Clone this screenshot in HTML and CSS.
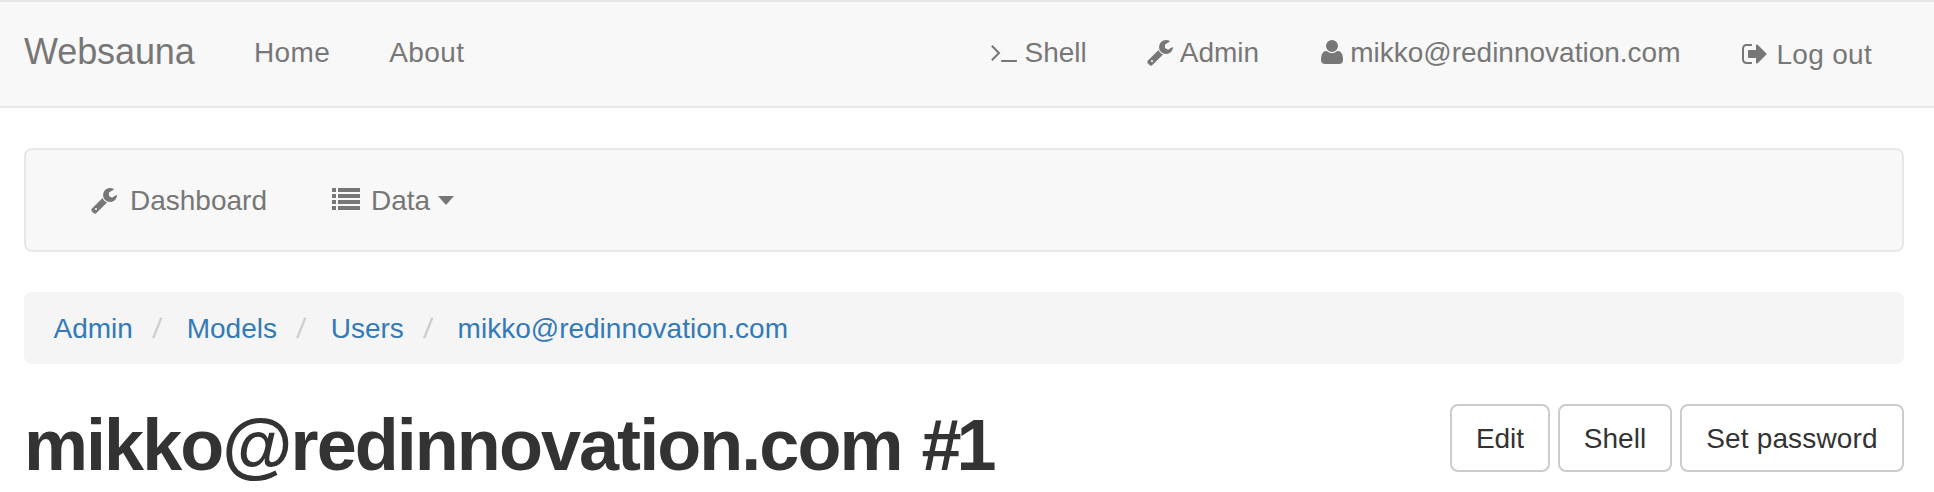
FILE: index.html
```
<!DOCTYPE html>
<html lang="en">
<head>
<meta charset="utf-8">
<title>Websauna admin</title>
<link rel="stylesheet" href="styles.css">
</head>
<body>
<svg class="defs" width="0" height="0" aria-hidden="true">
  <symbol id="terminal" viewBox="0 0 1792 1792"><path d="M649 983l-466 466q-10 10-23 10t-23-10l-50-50q-10-10-10-23t10-23l393-393-393-393q-10-10-10-23t10-23l50-50q10-10 23-10t23 10l466 466q10 10 10 23t-10 23zm1079 457v64q0 14-9 23t-23 9h-960q-14 0-23-9t-9-23v-64q0-14 9-23t23-9h960q14 0 23 9t9 23z"/></symbol>
  <symbol id="wrench" viewBox="0 0 1792 1792"><path d="M448 1472q0-26-19-45t-45-19-45 19-19 45 19 45 45 19 45-19 19-45zm644-420l-682 682q-37 37-90 37-52 0-91-37l-106-108q-38-36-38-90 0-53 38-91l681-681q39 98 114.500 173.500t173.500 114.500zm634-435q0 39-23 106-47 134-164.500 217.500t-258.500 83.500q-185 0-316.500-131.500t-131.500-316.500 131.500-316.500 316.500-131.500q58 0 121.500 16.500t107.500 46.500q16 11 16 28t-16 28l-293 169v224l193 107q5-3 79-48.500t135.500-81 70.500-35.500q15 0 23.500 10t8.500 25z"/></symbol>
  <symbol id="user" viewBox="0 0 1792 1792"><path d="M1600 1405q0 120-73 189.500t-194 69.500h-874q-121 0-194-69.500t-73-189.500q0-53 3.500-103.500t14-109 26.500-108.500 43-97.500 62-81 85.500-53.500 111.500-20q9 0 42 21.500t74.500 48 108 48 133.500 21.500 133.500-21.500 108-48 74.500-48 42-21.500q61 0 111.500 20t85.500 53.500 62 81 43 97.500 26.500 108.500 14 109 3.500 103.500zm-320-893q0 159-112.500 271.500t-271.500 112.500-271.500-112.500-112.500-271.500 112.500-271.500 271.500-112.500 271.500 112.500 112.500 271.500z"/></symbol>
  <symbol id="sign-out" viewBox="0 0 1792 1792"><path d="M704 1440q0 4 1 20t.5 26.500-3 23.500-10 19.500-20.500 6.500h-320q-119 0-203.500-84.500t-84.500-203.500v-704q0-119 84.500-203.500t203.500-84.500h320q13 0 22.500 9.500t9.500 22.500q0 4 1 20t.5 26.500-3 23.500-10 19.500-20.500 6.500h-320q-66 0-113 47t-47 113v704q0 66 47 113t113 47h312l11.500 1 11.500 3 8 5.500 7 9 2 13.500zm928-544q0 26-19 45l-544 544q-19 19-45 19t-45-19-19-45v-288h-448q-26 0-45-19t-19-45v-384q0-26 19-45t45-19h448v-288q0-26 19-45t45-19 45 19l544 544q19 19 19 45z"/></symbol>
  <symbol id="list" viewBox="0 0 28 28"><path d="M0 4h4v4H0zM6 4h22v4H6zM0 10h4v4H0zM6 10h22v4H6zM0 16h4v4H0zM6 16h22v4H6zM0 22h4v4H0zM6 22h22v4H6z"/></symbol>
</svg>
<header class="navbar">
  <a class="brand">Websauna</a>
  <nav class="links"><a class="home">Home</a><a class="about">About</a></nav>
  <nav class="account">
    <a><svg class="icon terminal"><use href="#terminal"/></svg><span>Shell</span></a>
    <a class="admin"><svg class="icon"><use href="#wrench"/></svg><span>Admin</span></a>
    <a class="profile"><svg class="icon"><use href="#user"/></svg><span>mikko@redinnovation.com</span></a>
    <a class="logout"><svg class="icon"><use href="#sign-out"/></svg><span>Log out</span></a>
  </nav>
</header>
<main class="container">
  <nav class="toolbar">
    <a><svg class="icon dash"><use href="#wrench"/></svg><span>Dashboard</span></a>
    <a><svg class="icon list"><use href="#list"/></svg><span>Data</span><i class="caret"></i></a>
  </nav>
  <ol class="breadcrumb">
    <li><a>Admin</a></li><li><a>Models</a></li><li><a>Users</a></li><li><a>mikko@redinnovation.com</a></li>
  </ol>
  <div class="heading">
    <h1>mikko@redinnovation.com <span class="record">#1</span></h1>
    <div class="actions"><button class="edit">Edit</button><button class="shell">Shell</button><button class="password">Set password</button></div>
  </div>
</main>
</body>
</html>
```
FILE: styles.css
```
* { box-sizing: border-box; }
body {
  margin: 0;
  background: #fff;
  color: #333;
  font: 28px/40px "Liberation Sans", Arial, sans-serif;
}
.defs { position: absolute; }
.navbar {
  display: flex;
  align-items: flex-start;
  height: 108px;
  padding: 31px 62px 0 24px;
  background: #f8f8f8;
  border: solid #e7e7e7;
  border-width: 2px 0;
  color: #777;
}
.brand { font-size: 36px; width: 230px; margin-top: -1px; letter-spacing: -.1px; }
.links { display: flex; gap: 59px; letter-spacing: .4px; }
.account { display: flex; margin-left: auto; }
.account a { display: flex; white-space: nowrap; }
.account .admin { margin-left: 59px; }
.account .profile { margin-left: 59px; }
.account .logout { margin-left: 61px; padding-top: 2px; letter-spacing: .3px; }
.icon { flex: none; width: 28px; height: 28px; fill: currentColor; margin: 5px 6px 0 0; }
.account .profile .icon { margin-right: 4px; }
.account .logout .icon { margin-right: 7px; }
.container { padding: 40px 30px 0 24px; }
.toolbar {
  display: flex;
  gap: 65px;
  height: 104px;
  padding: 31px 64px 0;
  background: #f8f8f8;
  border: 2px solid #e7e7e7;
  border-radius: 8px;
  color: #777;
}
.toolbar a { display: flex; }
.toolbar .dash { margin-right: 12px; }
.toolbar .list { margin: 3px 11px 0 0; }
.caret {
  margin: 15px 0 0 8px;
  height: 0;
  border: solid transparent;
  border-width: 9px 8px 0;
  border-top-color: #777;
}
.breadcrumb {
  display: flex;
  list-style: none;
  height: 72px;
  margin: 40px 0;
  padding: 17px 29.500px 0;
  background: #f5f5f5;
  border-radius: 8px;
  color: #337ab7;
}
.breadcrumb li + li::before {
  content: "/";
  display: inline-block;
  margin: 0 26px 0 20px;
  color: #ccc;
  transform: skewX(-7deg);
}
.heading { display: flex; justify-content: space-between; align-items: flex-start; }
h1 { margin: 1px 0 0; font-size: 72px; line-height: 80px; letter-spacing: -1.95px; white-space: nowrap; }
.record { margin-left: 2px; letter-spacing: -5px; }
.actions { display: flex; gap: 8px; }
button {
  height: 68px;
  padding: 2px 0 0;
  border: 2px solid #ccc;
  border-radius: 8px;
  background: #fff;
  color: #333;
  font: inherit;
}
.edit { width: 100px; }
.shell { width: 114px; }
.password { width: 224px; letter-spacing: .15px; }
```
